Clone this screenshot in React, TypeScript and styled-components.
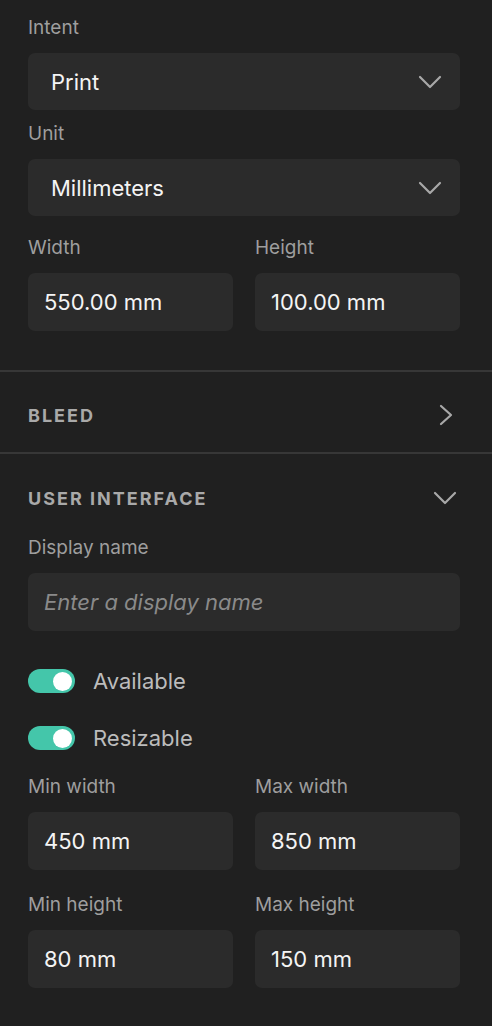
import React from 'react';
import styled, {createGlobalStyle} from 'styled-components';

const GlobalStyle = createGlobalStyle`
    html, body {
        margin: 0;
        padding: 0;
        background: #202020;
    }
    body {
        font-family: Inter, Roboto, "Liberation Sans", Arial, sans-serif;
        -webkit-font-smoothing: antialiased;
    }
`;

const ChevronDown = () => (
    <svg width="24" height="14" viewBox="0 0 24 14" fill="none">
        <path d="M2 2 L12 12 L22 2" stroke="#a8a8a8" strokeWidth="2.2" strokeLinecap="round" strokeLinejoin="round"/>
    </svg>
);

const ChevronRight = () => (
    <svg width="14" height="22" viewBox="0 0 14 22" fill="none">
        <path d="M2 2 L12 11 L2 20" stroke="#a8a8a8" strokeWidth="2.2" strokeLinecap="round" strokeLinejoin="round"/>
    </svg>
);

interface FieldProps {
    label: string
    top?: number
    children: React.ReactNode
}

const Field: React.FunctionComponent<FieldProps> = ({label, top = 0, children}) => (
    <FieldWrap $top={top}>
        <Label>{label}</Label>
        {children}
    </FieldWrap>
);

const Toggle: React.FunctionComponent<{label: string, top: number}> = ({label, top}) => (
    <ToggleRow $top={top}>
        <Switch><Knob/></Switch>
        <ToggleLabel>{label}</ToggleLabel>
    </ToggleRow>
);

const App = () => {
    return (
        <Panel>
            <GlobalStyle/>
            <Section $pt={17} $pb={39}>
                <Field label="Intent">
                    <Select $h={57}><span>Print</span><ChevronDown/></Select>
                </Field>
                <Field label="Unit" top={13}>
                    <Select $h={57}><span>Millimeters</span><ChevronDown/></Select>
                </Field>
                <Row $top={21}>
                    <Field label="Width">
                        <Input>550.00 mm</Input>
                    </Field>
                    <Field label="Height">
                        <Input>100.00 mm</Input>
                    </Field>
                </Row>
            </Section>
            <Divider/>
            <Header $h={80}>
                <HeaderTitle>BLEED</HeaderTitle>
                <IconSlot $right={7}><ChevronRight/></IconSlot>
            </Header>
            <Divider/>
            <Section $pt={22} $pb={39}>
                <Header $h={44} $flush>
                    <HeaderTitle>USER INTERFACE</HeaderTitle>
                    <IconSlot $right={3}><ChevronDown/></IconSlot>
                </Header>
                <Field label="Display name" top={17}>
                    <Input $placeholder>Enter a display name</Input>
                </Field>
                <Toggle label="Available" top={38}/>
                <Toggle label="Resizable" top={33}/>
                <Row $top={26}>
                    <Field label="Min width">
                        <Input>450 mm</Input>
                    </Field>
                    <Field label="Max width">
                        <Input>850 mm</Input>
                    </Field>
                </Row>
                <Row $top={24}>
                    <Field label="Min height">
                        <Input>80 mm</Input>
                    </Field>
                    <Field label="Max height">
                        <Input>150 mm</Input>
                    </Field>
                </Row>
            </Section>
        </Panel>
    );
}

const Panel = styled.div`
    width: 492px;
    min-height: 1026px;
    background: #202020;
    color: #f2f2f2;
`;

const Section = styled.div<{$pt: number, $pb: number}>`
    padding: ${p => p.$pt}px 32px ${p => p.$pb}px 28px;
    display: flex;
    flex-direction: column;
`;

const FieldWrap = styled.div<{$top: number}>`
    display: flex;
    flex-direction: column;
    gap: 14px;
    margin-top: ${p => p.$top}px;
    min-width: 0;
`;

const Label = styled.div`
    font-size: 19px;
    line-height: 22px;
    color: #9e9e9e;
`;

const Select = styled.div<{$h: number}>`
    height: ${p => p.$h}px;
    box-sizing: border-box;
    background: #2b2b2b;
    border-radius: 7px;
    padding: 0 18px 0 23px;
    display: flex;
    align-items: center;
    justify-content: space-between;
    font-size: 22px;
    color: #f4f4f4;
`;

const Input = styled.div<{$placeholder?: boolean}>`
    height: 58px;
    box-sizing: border-box;
    background: #2b2b2b;
    border-radius: 7px;
    padding: 0 16px;
    display: flex;
    align-items: center;
    font-size: 22px;
    color: ${p => p.$placeholder ? '#8a8a8a' : '#f4f4f4'};
    font-style: ${p => p.$placeholder ? 'italic' : 'normal'};
`;

const Row = styled.div<{$top: number}>`
    display: grid;
    grid-template-columns: 1fr 1fr;
    column-gap: 22px;
    margin-top: ${p => p.$top}px;
`;

const Divider = styled.div`
    height: 2px;
    background: #373737;
`;

const Header = styled.div<{$h: number, $flush?: boolean}>`
    height: ${p => p.$h}px;
    box-sizing: border-box;
    padding: ${p => p.$flush ? '0' : '6px 32px 0 28px'};
    display: flex;
    align-items: center;
    justify-content: space-between;
`;

const HeaderTitle = styled.div`
    font-size: 18px;
    font-weight: 700;
    letter-spacing: 2px;
    color: #a9a9a9;
`;

const IconSlot = styled.div<{$right: number}>`
    display: flex;
    margin-right: ${p => p.$right}px;
`;

const ToggleRow = styled.div<{$top: number}>`
    display: flex;
    align-items: center;
    gap: 18px;
    margin-top: ${p => p.$top}px;
    height: 24px;
`;

const Switch = styled.div`
    width: 47px;
    height: 24px;
    border-radius: 12px;
    background: #44c6aa;
    display: flex;
    align-items: center;
    justify-content: flex-end;
    padding-right: 3px;
    box-sizing: border-box;
`;

const Knob = styled.div`
    width: 19px;
    height: 19px;
    border-radius: 50%;
    background: #ffffff;
`;

const ToggleLabel = styled.div`
    font-size: 22px;
    color: #bcbcbc;
`;

export default App;
